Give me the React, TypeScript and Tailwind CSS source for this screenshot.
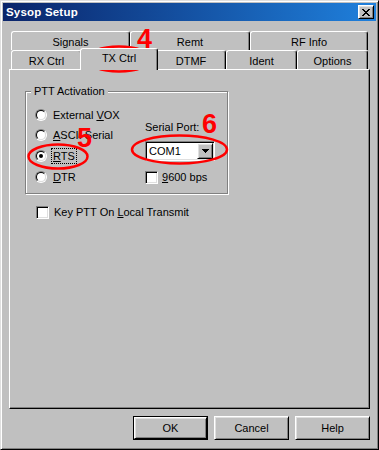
import React from "react";

const raised =
  "border border-t-white border-l-white border-r-black border-b-black shadow-[inset_1px_1px_#dfdfdf,inset_-1px_-1px_#808080]";
const sunken =
  "border border-t-[#808080] border-l-[#808080] border-r-white border-b-white shadow-[inset_1px_1px_#000,inset_-1px_-1px_#dfdfdf]";

function Tab({ label, w, selected }: { label: string; w: string; selected?: boolean }) {
  if (selected) {
    return (
      <div
        className={`relative z-10 ${w} h-[22px] -mt-[2px] -mx-[2px] shrink-0 bg-[#c0c0c0] border-t border-l border-r border-t-white border-l-white border-r-black rounded-t-[3px] shadow-[inset_-1px_0_#808080] flex justify-center pt-[3px] leading-[13px]`}
      >
        {label}
      </div>
    );
  }
  return (
    <div
      className={`${w} h-full shrink-0 bg-[#c0c0c0] border-t border-l border-r border-t-white border-l-white border-r-black rounded-t-[3px] shadow-[inset_-1px_0_#808080] flex justify-center pt-[4px] leading-[13px]`}
    >
      {label}
    </div>
  );
}

function Radio({ checked }: { checked?: boolean }) {
  return (
    <div className="w-[12px] h-[12px] shrink-0 rounded-full border border-t-[#808080] border-l-[#808080] border-r-white border-b-white">
      <div className="w-full h-full rounded-full border border-t-black border-l-black border-r-[#dfdfdf] border-b-[#dfdfdf] bg-white flex items-center justify-center">
        {checked && <div className="w-[4px] h-[4px] rounded-full bg-black" />}
      </div>
    </div>
  );
}

function Check() {
  return <div className={`w-[13px] h-[13px] shrink-0 bg-white ${sunken}`} />;
}

function RadioRow({
  h,
  pre,
  u,
  post,
  checked,
  focus,
}: {
  h: string;
  pre: string;
  u: string;
  post: string;
  checked?: boolean;
  focus?: boolean;
}) {
  return (
    <div className={`${h} flex items-center`}>
      <Radio checked={checked} />
      <span
        className={`ml-[4px] px-[1px] leading-[14px] border ${
          focus ? "border-dotted border-black" : "border-transparent"
        }`}
      >
        {pre}
        <span className="underline underline-offset-[1px]">{u}</span>
        {post}
      </span>
    </div>
  );
}

export default function App() {
  return (
    <div className="relative w-[379px] h-[450px] bg-[#c0c0c0] border border-t-[#dfdfdf] border-l-[#dfdfdf] border-r-black border-b-black shadow-[inset_1px_1px_#fff,inset_-1px_-1px_#808080] p-[2px] flex flex-col font-['Liberation_Sans',Arial,sans-serif] text-[11px] text-black overflow-hidden">
      {/* Title bar */}
      <div className="h-[18px] shrink-0 flex items-center bg-[linear-gradient(to_right,#0a246a,#1f80dc)] pl-[3px] pr-[2px]">
        <span className="text-white font-bold text-[11.5px] leading-[14px] tracking-[0.2px]">Sysop Setup</span>
        <div className={`ml-auto w-[16px] h-[14px] bg-[#c0c0c0] ${raised} flex items-center justify-center`}>
          <svg width="8" height="7" viewBox="0 0 8 7" shapeRendering="crispEdges">
            <path
              d="M0 0h2v1h-2z M6 0h2v1h-2z M1 1h2v1h-2z M5 1h2v1h-2z M2 2h4v1h-4z M3 3h2v1h-2z M2 4h4v1h-4z M1 5h2v1h-2z M5 5h2v1h-2z M0 6h2v1h-2z M6 6h2v1h-2z"
              fill="#000"
            />
          </svg>
        </div>
      </div>

      {/* Body */}
      <div className="px-[6px] flex flex-col">
        {/* Tabs */}
        <div className="mt-[10px] ml-[2px] flex flex-col">
          <div className="flex h-[19px]">
            <Tab label="Signals" w="w-[119px]" />
            <Tab label="Remt" w="w-[120px]" />
            <Tab label="RF Info" w="w-[118px]" />
          </div>
          <div className="flex h-[19px]">
            <Tab label="RX Ctrl" w="w-[71px]" />
            <Tab label="TX Ctrl" w="w-[78px]" selected />
            <Tab label="DTMF" w="w-[70px]" />
            <Tab label="Ident" w="w-[71px]" />
            <Tab label="Options" w="w-[71px]" />
          </div>
        </div>

        {/* Panel */}
        <div className="h-[340px] border border-t-white border-l-white border-r-black border-b-black shadow-[inset_-1px_-1px_#808080] flex flex-col">
          {/* Group box */}
          <div className="relative mt-[21px] ml-[15px] w-[203px] h-[103px] border border-[#808080] shadow-[inset_1px_1px_#fff,1px_1px_#fff] flex">
            <span className="absolute -top-[7px] left-[5px] px-[3px] bg-[#c0c0c0] leading-[13px]">PTT Activation</span>
            <div className="w-[119px] pl-[9px] pt-[12px] flex flex-col">
              <RadioRow h="h-[21px]" pre="External " u="V" post="OX" />
              <RadioRow h="h-[20px]" pre="" u="A" post="SCII Serial" />
              <RadioRow h="h-[21px]" pre="" u="R" post="TS" checked focus />
              <RadioRow h="h-[21px]" pre="" u="D" post="TR" />
            </div>
            <div className="flex flex-col pt-[29px]">
              <span className="leading-[13px]">Serial Port:</span>
              <div className={`mt-[7px] w-[70px] h-[20px] bg-white ${sunken} flex items-center p-[1px]`}>
                <span className="pl-[2px] leading-[13px]">COM1</span>
                <div className={`ml-auto w-[16px] h-[16px] bg-[#c0c0c0] ${raised} flex items-center justify-center`}>
                  <svg width="7" height="4" viewBox="0 0 7 4" shapeRendering="crispEdges">
                    <path d="M0 0h7v1h-7z M1 1h5v1h-5z M2 2h3v1h-3z M3 3h1v1h-1z" fill="#000" />
                  </svg>
                </div>
              </div>
              <div className="mt-[10px] flex items-center h-[13px]">
                <Check />
                <span className="ml-[3px] pl-[1px] leading-[13px]">
                  <span className="underline underline-offset-[1px]">9</span>600 bps
                </span>
              </div>
            </div>
          </div>

          {/* Key PTT */}
          <div className="mt-[12px] ml-[26px] flex items-center h-[13px]">
            <Check />
            <span className="ml-[4px] pl-[1px] leading-[13px]">
              Key PTT On <span className="underline underline-offset-[1px]">L</span>ocal Transmit
            </span>
          </div>
        </div>

        {/* Buttons */}
        <div className="mt-[7px] flex justify-end gap-[6px]">
          <div className="w-[75px] h-[24px] border border-black">
            <div className={`w-full h-full ${raised} flex items-center justify-center leading-[13px]`}>OK</div>
          </div>
          <div className={`w-[75px] h-[24px] ${raised} flex items-center justify-center leading-[13px]`}>Cancel</div>
          <div className={`w-[75px] h-[24px] ${raised} flex items-center justify-center leading-[13px]`}>Help</div>
        </div>
      </div>

      {/* Red annotations */}
      <svg
        className="absolute left-0 top-0 pointer-events-none"
        width="379"
        height="450"
        viewBox="0 0 379 450"
      >
        <g fill="none" stroke="#f00" strokeWidth="2.5">
          <ellipse cx="118" cy="58" rx="32" ry="12.5" />
          <ellipse cx="57" cy="155.5" rx="29.5" ry="12" />
          <ellipse cx="178.5" cy="148.5" rx="47.5" ry="14" />
        </g>
        <g fill="#f00" fontFamily="'Liberation Sans', Arial, sans-serif" fontWeight="700" fontSize="27">
          <text x="136" y="47">4</text>
          <text x="76" y="146">5</text>
          <text x="201" y="132">6</text>
        </g>
      </svg>
    </div>
  );
}
